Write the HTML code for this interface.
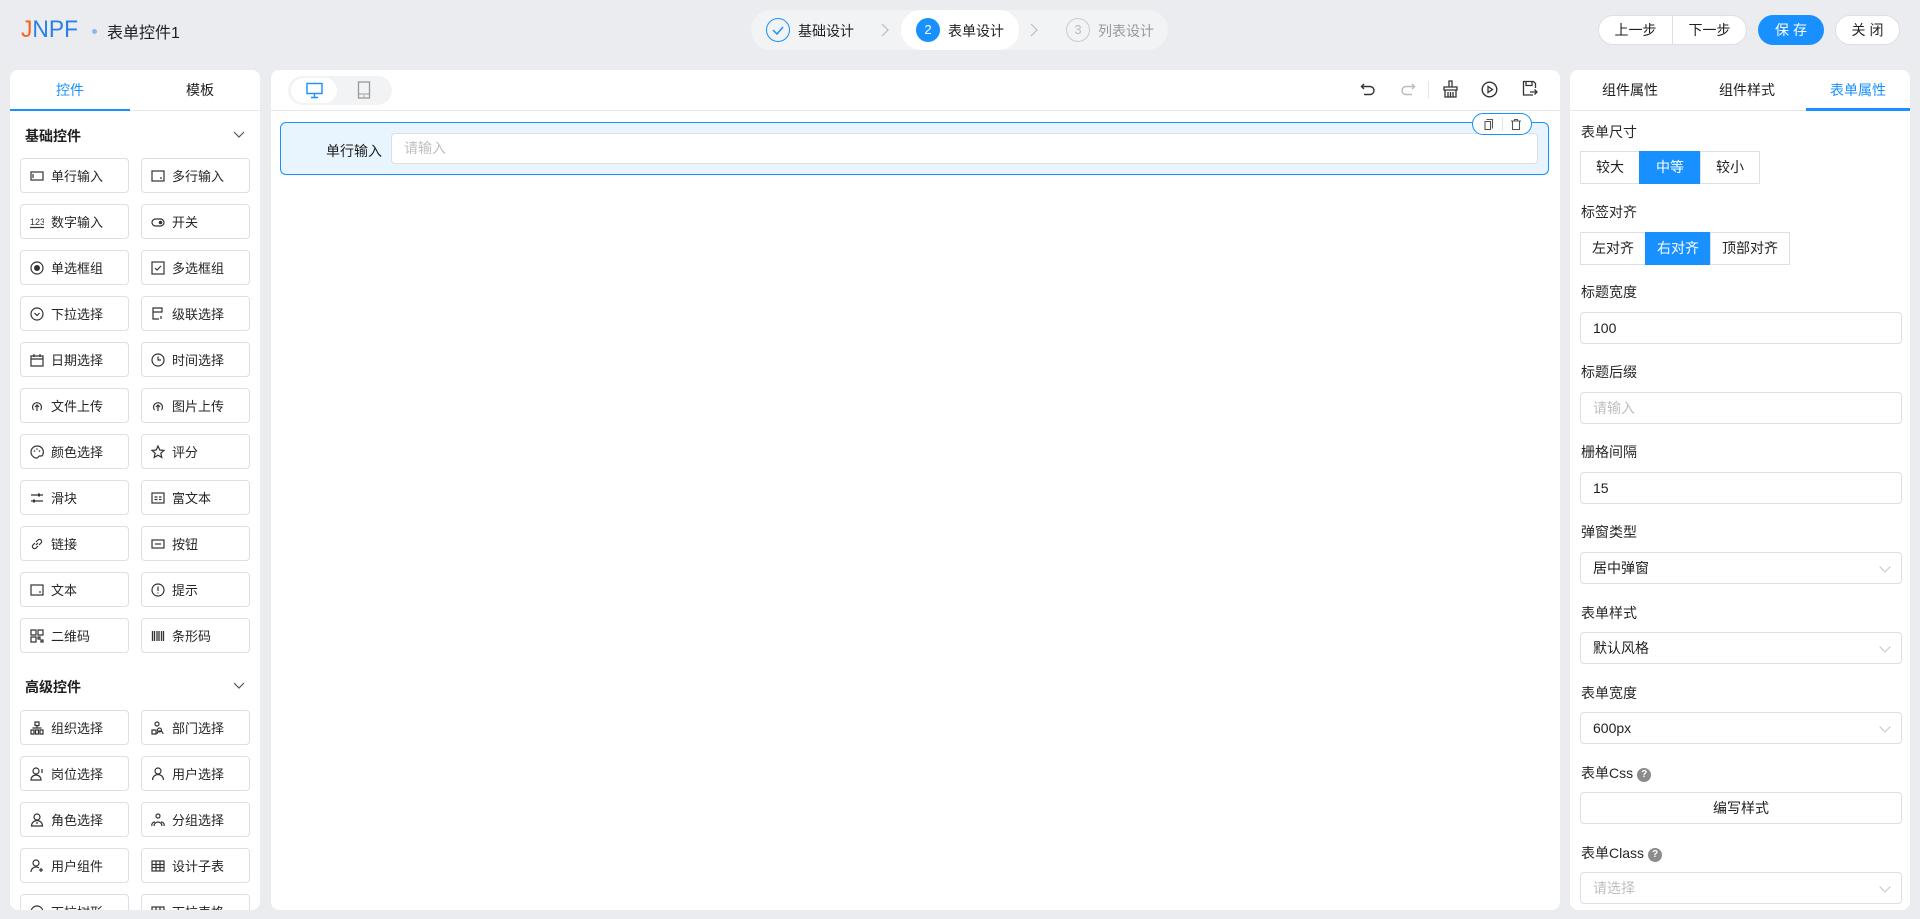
<!DOCTYPE html>
<html><head><meta charset="utf-8"><style>
*{box-sizing:border-box;margin:0;padding:0}
body{width:1920px;height:919px;background:#ebecf0;font-family:"Liberation Sans","Noto Sans CJK SC",sans-serif;color:#1f1f1f;position:relative;overflow:hidden;font-size:14px}
.abs{position:absolute}
.panel{position:absolute;background:#fff;border-radius:8px;overflow:hidden}
.cbtn{position:absolute;width:109px;height:35px;border:1px solid #dcdfe6;border-radius:4px;font-size:13px;display:flex;align-items:center;padding-left:9px;color:#262626}
.cbtn svg{width:14px;height:14px;margin-right:7px;flex:none}
.lbl{position:absolute;left:11px;font-size:14px;color:#262626}
.inp{position:absolute;left:10px;width:322px;height:32px;border:1px solid #dcdfe6;border-radius:4px;padding-left:12px;line-height:30px;font-size:14px}
.arrow{position:absolute;right:12px;top:10px;width:8px;height:8px;border-right:1px solid #c0c4cc;border-bottom:1px solid #c0c4cc;transform:rotate(45deg)}
.grp{position:absolute;left:10px;display:flex;height:33px}
.grp div{border:1px solid #dcdfe6;margin-left:-1px;padding:0 12px;line-height:31px;font-size:14px}
.grp .on{background:#1890ff;color:#fff;border-color:#1890ff}
.q{display:inline-block;width:14px;height:14px;border-radius:50%;background:#8c8c8c;color:#fff;font-size:10px;text-align:center;line-height:14px;font-weight:bold;vertical-align:1px;margin-left:4px}
</style></head><body>
<!-- header -->
<div class="abs" style="left:21px;top:16px;font-size:24px;font-weight:normal;letter-spacing:0;line-height:28px;transform:scaleX(0.95);transform-origin:left"><span style="color:#f5631b">J</span><span style="color:#2a7fe8">NPF</span></div>
<div class="abs" style="left:92px;top:29px;width:5px;height:5px;border-radius:50%;background:#8db8f0"></div>
<div class="abs" style="left:107px;top:19px;font-size:16px">表单控件1</div>

<div class="abs" style="left:751px;top:10px;width:417px;height:40px;border-radius:20px;background:#f2f3f5"></div>
<div class="abs" style="left:901px;top:10px;width:118px;height:40px;border-radius:20px;background:#fff"></div>
<div class="abs" style="left:766px;top:18px;width:24px;height:24px;border:1px solid #1890ff;border-radius:50%"><svg width="22" height="22" viewBox="0 0 22 22"><path d="M6 11l4 4 6-7" fill="none" stroke="#1890ff" stroke-width="1.5"/></svg></div>
<div class="abs" style="left:798px;top:21px;font-size:14px">基础设计</div>
<svg class="abs" style="left:880px;top:22px" width="10" height="16"><path d="M2 2l6 6-6 6" fill="none" stroke="#bbb" stroke-width="1.2"/></svg>
<div class="abs" style="left:916px;top:18px;width:24px;height:24px;background:#1890ff;border-radius:50%;color:#fff;text-align:center;line-height:24px;font-size:13px">2</div>
<div class="abs" style="left:948px;top:21px;font-size:14px">表单设计</div>
<svg class="abs" style="left:1029px;top:22px" width="10" height="16"><path d="M2 2l6 6-6 6" fill="none" stroke="#bbb" stroke-width="1.2"/></svg>
<div class="abs" style="left:1066px;top:18px;width:24px;height:24px;border:1px solid #ccc;border-radius:50%;color:#bbb;text-align:center;line-height:22px;font-size:13px">3</div>
<div class="abs" style="left:1098px;top:21px;font-size:14px;color:#999">列表设计</div>

<div class="abs" style="left:1598px;top:15px;width:149px;height:30px;border:1px solid #dcdfe6;border-radius:15px;background:#fff;display:flex;font-size:14px;line-height:28px"><div style="width:74px;text-align:center;border-right:1px solid #dcdfe6">上一步</div><div style="flex:1;text-align:center">下一步</div></div>
<div class="abs" style="left:1758px;top:15px;width:66px;height:30px;border-radius:15px;background:#1890ff;color:#fff;text-align:center;line-height:30px;letter-spacing:4px;text-indent:4px">保存</div>
<div class="abs" style="left:1835px;top:15px;width:65px;height:30px;border:1px solid #dcdfe6;border-radius:15px;background:#fff;text-align:center;line-height:28px;letter-spacing:4px;text-indent:4px">关闭</div>

<!-- left panel -->
<div class="panel" style="left:10px;top:70px;width:250px;height:840px">
 <div class="abs" style="left:0;top:0;width:250px;height:41px;border-bottom:1px solid #e8e8e8"></div>
 <div class="abs" style="left:0;top:0;width:120px;text-align:center;line-height:40px;color:#1890ff">控件</div>
 <div class="abs" style="left:130px;top:0;width:120px;text-align:center;line-height:40px">模板</div>
 <div class="abs" style="left:0;top:39px;width:120px;height:2px;background:#1890ff"></div>
 <div class="abs" style="left:15px;top:56px;font-weight:bold;font-size:14px">基础控件</div>
 <svg class="abs" style="left:223px;top:60px" width="12" height="10"><path d="M1 2l5 5 5-5" fill="none" stroke="#555" stroke-width="1.2"/></svg>
 <div class="abs" style="left:15px;top:607px;font-weight:bold;font-size:14px">高级控件</div>
 <svg class="abs" style="left:223px;top:611px" width="12" height="10"><path d="M1 2l5 5 5-5" fill="none" stroke="#555" stroke-width="1.2"/></svg>
</div>

<!-- canvas -->
<div class="panel" style="left:271px;top:70px;width:1289px;height:840px">
 <div class="abs" style="left:0;top:40px;width:1289px;height:1px;background:#e8e8e8"></div>
 <div class="abs" style="left:17px;top:6px;width:104px;height:29px;border-radius:15px;background:#f2f3f5"></div>
 <div class="abs" style="left:20px;top:8px;width:46px;height:25px;border-radius:13px;background:#fff"></div>
 <svg class="abs" style="left:35px;top:12px" width="17" height="17" viewBox="0 0 17 17"><rect x="1" y="1.5" width="15" height="10" fill="none" stroke="#1890ff" stroke-width="1.4"/><path d="M8.5 12v3M5 15.5h7" stroke="#1890ff" stroke-width="1.4"/></svg>
 <svg class="abs" style="left:86px;top:11px" width="14" height="18" viewBox="0 0 14 18"><rect x="1.5" y="1" width="11" height="16" fill="none" stroke="#999" stroke-width="1.3"/><path d="M1.5 13h11" stroke="#999"/><circle cx="7" cy="15" r=".8" fill="#999"/></svg>
 <svg class="abs" style="left:1089px;top:11px" width="16" height="16" viewBox="0 0 16 16"><path d="M4 3L1.5 5.5 4 8M1.5 5.5H10a4 4 0 010 8H4" fill="none" stroke="#333" stroke-width="1.4"/></svg>
 <svg class="abs" style="left:1129px;top:11px" width="16" height="16" viewBox="0 0 16 16"><path d="M12 3l2.5 2.5L12 8M14.5 5.5H6a4 4 0 000 8h6" fill="none" stroke="#bbb" stroke-width="1.4"/></svg>
 <div class="abs" style="left:1157px;top:11px;width:1px;height:17px;background:#e5e5e5"></div>
 <svg class="abs" style="left:1171px;top:10px" width="17" height="18" viewBox="0 0 17 18"><path d="M7 1h3v6H7zM2 7h13v3H2zM3 10v7h11v-7M6 12v5M8.5 12v5M11 12v5" fill="none" stroke="#333" stroke-width="1.3"/></svg>
 <svg class="abs" style="left:1210px;top:11px" width="17" height="17" viewBox="0 0 17 17"><circle cx="8.5" cy="8.5" r="7.3" fill="none" stroke="#333" stroke-width="1.4"/><path d="M7 5.5v6l4.5-3z" fill="none" stroke="#333" stroke-width="1.3"/></svg>
 <svg class="abs" style="left:1251px;top:10px" width="16" height="17" viewBox="0 0 16 17"><path d="M11 15H1.5V1.5h10l2 2V8M4 1.5v4h6v-4M8 12h7M12.5 9.5L15 12l-2.5 2.5" fill="none" stroke="#333" stroke-width="1.3"/></svg>
 <div class="abs" style="left:9px;top:52px;width:1269px;height:53px;border:1px solid #1890ff;border-radius:6px;background:#e8f5fe"></div>
 <div class="abs" style="left:40px;top:71px;width:71px;text-align:right;font-size:14px">单行输入</div>
 <div class="abs" style="left:120px;top:63px;width:1147px;height:31px;border:1px solid #dcdfe6;border-radius:4px;background:#fff;padding-left:12px;line-height:29px;color:#bfbfbf">请输入</div>
 <div class="abs" style="left:1201px;top:43px;width:60px;height:22px;border:1px solid #1890ff;border-radius:11px;background:#fff"></div>
 <div class="abs" style="left:1231px;top:47px;width:1px;height:14px;background:#e5e5e5"></div>
 <svg class="abs" style="left:1212px;top:48px" width="12" height="13" viewBox="0 0 12 13"><path d="M3.5 1.5h6v9M2 3.5h5.5v8H2z" fill="none" stroke="#555" stroke-width="1.1"/></svg>
 <svg class="abs" style="left:1239px;top:48px" width="12" height="13" viewBox="0 0 12 13"><path d="M1 3h10M4.5 3V1.5h3V3M2.5 3v8.5h7V3" fill="none" stroke="#555" stroke-width="1.1"/></svg>
</div>

<!-- right panel -->
<div class="panel" style="left:1570px;top:70px;width:340px;height:840px">
 <div class="abs" style="left:0;top:40px;width:340px;height:1px;background:#e8e8e8"></div>
 <div class="abs" style="left:0;top:0;width:120px;text-align:center;line-height:40px">组件属性</div>
 <div class="abs" style="left:118px;top:0;width:118px;text-align:center;line-height:40px">组件样式</div>
 <div class="abs" style="left:236px;top:0;width:104px;text-align:center;line-height:40px;color:#1890ff">表单属性</div>
 <div class="abs" style="left:236px;top:38px;width:104px;height:3px;background:#1890ff"></div>

 <div class="lbl" style="top:52px">表单尺寸</div>
 <div class="grp" style="top:81px"><div style="margin-left:0;padding:0 15px">较大</div><div class="on" style="padding:0 16px">中等</div><div style="padding:0 15px">较小</div></div>
 <div class="lbl" style="top:132px">标签对齐</div>
 <div class="grp" style="top:162px"><div style="margin-left:0;padding:0 11px">左对齐</div><div class="on" style="padding:0 11px">右对齐</div><div style="padding:0 11px">顶部对齐</div></div>
 <div class="lbl" style="top:212px">标题宽度</div>
 <div class="inp" style="top:242px">100</div>
 <div class="lbl" style="top:292px">标题后缀</div>
 <div class="inp" style="top:322px;color:#bfbfbf">请输入</div>
 <div class="lbl" style="top:372px">栅格间隔</div>
 <div class="inp" style="top:402px">15</div>
 <div class="lbl" style="top:452px">弹窗类型</div>
 <div class="inp" style="top:482px">居中弹窗<span class="arrow"></span></div>
 <div class="lbl" style="top:533px">表单样式</div>
 <div class="inp" style="top:562px">默认风格<span class="arrow"></span></div>
 <div class="lbl" style="top:613px">表单宽度</div>
 <div class="inp" style="top:642px">600px<span class="arrow"></span></div>
 <div class="lbl" style="top:693px">表单Css<span class="q">?</span></div>
 <div class="inp" style="top:722px;text-align:center;padding:0">编写样式</div>
 <div class="lbl" style="top:773px">表单Class<span class="q">?</span></div>
 <div class="inp" style="top:802px;color:#bfbfbf">请选择<span class="arrow"></span></div>
</div>

<div class="abs" style="left:10px;top:158px;width:250px;height:752px;overflow:hidden">
<script>
var S='fill="none" stroke="#333" stroke-width="1.2"';
var ic={
r:'<rect x="1" y="3" width="12" height="8" '+S+'/><path d="M3 5v4" '+S+'/>',
m:'<rect x="1" y="2" width="12" height="10" '+S+'/><path d="M9 9h2" '+S+'/>',
n:'<text x="0" y="10" font-size="9" font-family="Liberation Sans" fill="#333">123</text><path d="M0 12.5h14" '+S+'/>',
s:'<rect x="1" y="4" width="12" height="7" rx="3.5" '+S+'/><circle cx="9.5" cy="7.5" r="1.8" fill="#333"/>',
rd:'<circle cx="7" cy="7" r="6" '+S+'/><circle cx="7" cy="7" r="3" fill="#333"/>',
cb:'<rect x="1" y="1" width="12" height="12" '+S+'/><path d="M4 7l2 2 4-4" '+S+'/>',
dd:'<circle cx="7" cy="7" r="6" '+S+'/><path d="M4.5 6l2.5 2.5L9.5 6" '+S+'/>',
cs:'<path d="M2 1h9v4H2zM2 5v7h6M10 9v3" '+S+'/>',
dt:'<path d="M1 3h12v10H1zM1 6h12M4 1v3M10 1v3" '+S+'/>',
tm:'<circle cx="7" cy="7" r="6" '+S+'/><path d="M7 3.5V7h3" '+S+'/>',
up:'<path d="M3.5 11A4.5 4.5 0 1 1 10.5 11M7 12V6M5 8l2-2 2 2" '+S+'/>',
pl:'<path d="M7 1a6 6 0 1 0 0 12c1.5 0 1-2 2.5-2H11a2 2 0 0 0 2-2A6 6 0 0 0 7 1z" '+S+'/><circle cx="4.5" cy="6" r=".8" fill="#333"/><circle cx="7" cy="4" r=".8" fill="#333"/><circle cx="9.5" cy="6" r=".8" fill="#333"/>',
st:'<path d="M7 1l1.8 4 4.2.4-3.2 2.8 1 4.2L7 10.2 3.2 12.4l1-4.2L1 5.4l4.2-.4z" '+S+'/>',
sl:'<path d="M1 4h12M1 10h12" '+S+'/><rect x="8" y="2.5" width="2" height="3" fill="#333"/><rect x="3" y="8.5" width="2" height="3" fill="#333"/>',
rt:'<rect x="1" y="2" width="12" height="10" '+S+'/><path d="M3.5 6h3M3.5 8.5h3M8 6h2.5M8 8.5h2.5" '+S+'/>',
lk:'<path d="M6 8l2-2M5 6L3 8a2 2 0 0 0 3 3l2-2M9 8l2-2a2 2 0 0 0-3-3L6 5" '+S+'/>',
bt:'<rect x="1" y="3" width="12" height="8" '+S+'/><path d="M4 7h6" '+S+'/>',
tx:'<rect x="1" y="2" width="12" height="10" '+S+'/><path d="M9 9h2" '+S+'/>',
tp:'<circle cx="7" cy="7" r="6" '+S+'/><path d="M7 3.5v4.5M7 9.5v1" '+S+'/>',
qr:'<path d="M1 1h5v5H1zM8 1h5v5H8zM1 8h5v5H1zM8 8h2v2H8zM11 11h2v2h-2z" '+S+'/>',
bc:'<path d="M1.5 2v10M3.5 2v10M6 2v10M8 2v10M10.5 2v10M12.5 2v10" stroke="#333" stroke-width="1.3"/>',
og:'<path d="M5 1h4v3.5H5zM7 4.5V7M2.5 7h9M1 9h3v4H1zM5.5 9h3v4h-3zM10 9h3v4h-3z" '+S+'/>',
dp:'<circle cx="6" cy="3" r="2" '+S+'/><path d="M1 9h4v4H1zM8.5 7a2 2 0 1 0 .01 0M6 13a3 3 0 0 1 6 0" '+S+'/>',
ps:'<circle cx="6" cy="4" r="3" '+S+'/><path d="M1 13a5 5 0 0 1 10 0zM11 3h2M11 5h2" '+S+'/>',
us:'<circle cx="7" cy="4" r="3" '+S+'/><path d="M1.5 13a5.5 5.5 0 0 1 11 0" '+S+'/>',
ro:'<circle cx="7" cy="4" r="3" '+S+'/><path d="M1.5 13a5.5 5.5 0 0 1 11 0zM7 9v2" '+S+'/>',
gp:'<circle cx="7" cy="3" r="2" '+S+'/><path d="M3 13a4 4 0 0 1 8 0M1 13a3 3 0 0 1 3-4M13 13a3 3 0 0 0-3-4" '+S+'/>',
uc:'<circle cx="6" cy="4" r="3" '+S+'/><path d="M1 13a5 5 0 0 1 8-4M11 9v4M9 11h4" '+S+'/>',
tb:'<rect x="1" y="2" width="12" height="10" '+S+'/><path d="M1 5.5h12M1 8.5h12M5 2v10M9 2v10" '+S+'/>'
};
var L=[['单行输入','r'],['多行输入','m'],['数字输入','n'],['开关','s'],['单选框组','rd'],['多选框组','cb'],['下拉选择','dd'],['级联选择','cs'],['日期选择','dt'],['时间选择','tm'],['文件上传','up'],['图片上传','up'],['颜色选择','pl'],['评分','st'],['滑块','sl'],['富文本','rt'],['链接','lk'],['按钮','bt'],['文本','tx'],['提示','tp'],['二维码','qr'],['条形码','bc']];
var A=[['组织选择','og'],['部门选择','dp'],['岗位选择','ps'],['用户选择','us'],['角色选择','ro'],['分组选择','gp'],['用户组件','uc'],['设计子表','tb'],['下拉树形','dd'],['下拉表格','tb']];
var h='';
function put(arr,y0){arr.forEach(function(it,i){var x=i%2?131:10,y=y0+Math.floor(i/2)*46;h+='<div class="cbtn" style="left:'+x+'px;top:'+y+'px"><svg viewBox="0 0 14 14">'+ic[it[1]]+'</svg>'+it[0]+'</div>';});}
put(L,0);put(A,552);
document.write(h);
</script>
</div>
</body></html>
